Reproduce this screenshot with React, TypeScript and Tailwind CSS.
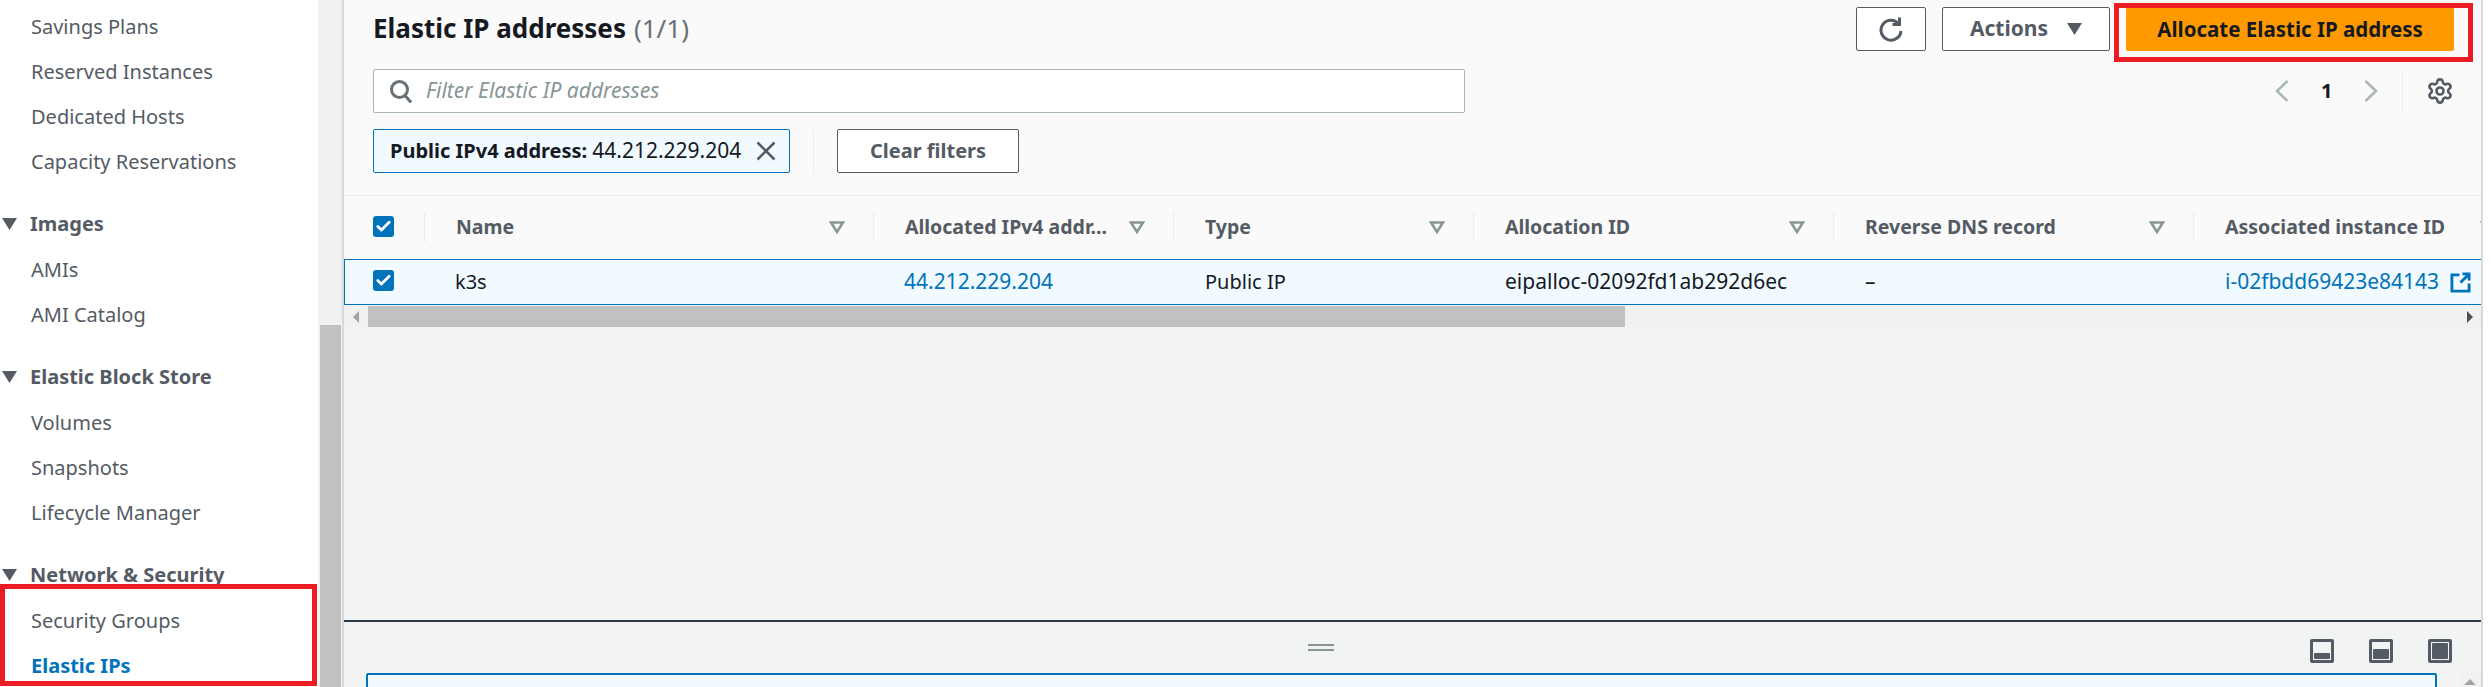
import { Check, Settings } from 'lucide-react';

const font = "font-['Noto_Sans','Open_Sans',sans-serif]";

const groups = [
  { title: '', items: ['Savings Plans', 'Reserved Instances', 'Dedicated Hosts', 'Capacity Reservations'] },
  { title: 'Images', items: ['AMIs', 'AMI Catalog'] },
  { title: 'Elastic Block Store', items: ['Volumes', 'Snapshots', 'Lifecycle Manager'] },
  { title: 'Network & Security', items: ['Security Groups', 'Elastic IPs'] },
];

const columns = [
  { name: 'Name', width: 'w-[449px]' },
  { name: 'Allocated IPv4 addr...', width: 'w-[300px]' },
  { name: 'Type', width: 'w-[300px]' },
  { name: 'Allocation ID', width: 'w-[360px]' },
  { name: 'Reverse DNS record', width: 'w-[360px]' },
  { name: 'Associated instance ID', width: 'w-[331px]' },
];

function Caret() {
  return (
    <svg viewBox="0 0 15 12" className="w-[15px] h-[12px] shrink-0">
      <path d="M0 0h15l-7.500 12z" fill="#545b64" />
    </svg>
  );
}

function FilterIcon() {
  return (
    <svg viewBox="0 0 16 13" className="w-4 h-[13px] shrink-0">
      <path d="M2 1.500h12l-6 9.500z" fill="none" stroke="#879596" strokeWidth="2.500" />
    </svg>
  );
}

function Box() {
  return (
    <div className="w-[21px] h-[21px] rounded-[3px] bg-[#0073bb] flex items-center justify-center">
      <Check className="w-[17px] h-[17px] text-white" strokeWidth={4} />
    </div>
  );
}

function Chevron({ d }: { d: string }) {
  return (
    <svg viewBox="0 0 14 22" className="w-[14px] h-[22px] shrink-0" fill="none" stroke="#aab7b8" strokeWidth="2.500">
      <path d={d} />
    </svg>
  );
}

function PanelIcon({ fill }: { fill: string }) {
  return (
    <div className="w-6 h-6 rounded-[2px] bg-[#545b64] p-[3px]">
      <div className="w-full h-full bg-[#f2f3f3] p-[1px] flex items-end">
        <div className={`w-full bg-[#545b64] rounded-[1px] ${fill}`} />
      </div>
    </div>
  );
}

function Sidebar() {
  return (
    <aside className="w-[318px] shrink-0 bg-white pt-[4px] overflow-hidden">
      {groups.map((group) => (
        <div key={group.title} className="mb-[17px]">
          {group.title && (
            <div className="h-[46px] flex items-center gap-[13px] pl-[2px] text-[20px] font-bold text-[#545b64]">
              <Caret />
              {group.title}
            </div>
          )}
          {group.items.map((item) => (
            <div
              key={item}
              className={`h-[45px] flex items-center pl-[31px] text-[20px] ${
                item === 'Elastic IPs' ? 'font-bold text-[#0073bb]' : 'text-[#545b64]'
              }`}
            >
              {item}
            </div>
          ))}
        </div>
      ))}
    </aside>
  );
}

function Toolbar() {
  return (
    <div className="h-[196px] border-b border-[#eaeded] flex justify-between pl-[29px] pr-[27px] bg-[#fafafa]">
      <div>
        <div className="h-[56px] flex items-center text-[26px] font-bold text-[#16191f]">
          Elastic IP addresses
          <span className="font-normal text-[#687078] ml-[8px]">(1/1)</span>
        </div>
        <div className="mt-[13px] w-[1092px] h-[44px] bg-white border border-[#aab7b8] rounded-[2px] flex items-center pl-[16px] gap-[14px] italic text-[21px] text-[#879596]">
          <svg viewBox="0 0 22 23" className="w-[22px] h-[23px] shrink-0" fill="none" stroke="#687078" strokeWidth="3">
            <circle cx="9.500" cy="9.500" r="8" />
            <path d="M15 15.500l6 7" />
          </svg>
          Filter Elastic IP addresses
        </div>
        <div className="mt-[16px] flex items-center">
          <div className="w-[417px] h-[44px] border border-[#0073bb] rounded-[2px] bg-[#f1faff] flex items-center pl-[16px] text-[21px] text-[#16191f]">
            <span className="font-bold text-[20px] mr-[5px]">Public IPv4 address:</span>
            44.212.229.204
            <svg viewBox="0 0 20 20" className="w-5 h-5 ml-[15px] shrink-0" fill="none" stroke="#545b64" strokeWidth="2.500">
              <path d="M1.500 1.500l17 17M18.500 1.500l-17 17" />
            </svg>
          </div>
          <div className="w-px h-[44px] bg-[#eaeded] ml-[23px] mr-[23px]" />
          <div className="w-[182px] h-[44px] bg-white border border-[#545b64] rounded-[2px] flex items-center justify-center text-[20px] font-bold text-[#545b64]">
            Clear filters
          </div>
        </div>
      </div>
      <div className="flex flex-col items-end">
        <div className="flex pt-[7px] gap-[16px]">
          <div className="w-[70px] h-[44px] bg-white border border-[#545b64] rounded-[2px] flex items-center justify-center">
            <svg viewBox="0 0 26 26" className="w-[26px] h-[26px]" fill="none" stroke="#545b64" strokeWidth="3">
              <path d="M20.500 7.500A10 10 0 1 0 23 15" />
              <path d="M21.500 1.500V8.500H14.500" />
            </svg>
          </div>
          <div className="w-[168px] h-[44px] bg-white border border-[#545b64] rounded-[2px] flex items-center justify-center gap-[19px] text-[21px] font-bold text-[#545b64]">
            Actions
            <Caret />
          </div>
          <div className="w-[328px] h-[44px] bg-[#ff9900] rounded-[2px] flex items-center justify-center text-[20.500px] font-bold text-[#16191f]">
            Allocate Elastic IP address
          </div>
        </div>
        <div className="mt-[18px] flex items-center h-[44px]">
          <Chevron d="M12.500 1L2 11l10.500 10" />
          <span className="w-[11px] mx-[32px] text-[20px] font-bold text-[#16191f] text-center">1</span>
          <Chevron d="M1.500 1L12 11 1.500 21" />
          <div className="w-px h-[44px] bg-[#eaeded] ml-[24px] mr-[23px]" />
          <Settings className="w-[28px] h-[28px] text-[#545b64]" strokeWidth={2.25} />
        </div>
      </div>
    </div>
  );
}

function EipTable() {
  return (
    <div>
      <div className="h-[63px] pb-[1px] flex items-center text-[19.500px] font-bold text-[#545b64] bg-[#fafafa]">
        <div className="w-[81px] shrink-0 pl-[29px] flex items-center justify-between">
          <div className="-mt-[2px]">
            <Box />
          </div>
          <div className="w-px h-[30px] bg-[#eaeded]" />
        </div>
        {columns.map((col) => (
          <div key={col.name} className={`${col.width} shrink-0 flex items-center justify-between pl-[31px]`}>
            <span className="whitespace-nowrap">{col.name}</span>
            <div className="flex items-center gap-[28px]">
              <FilterIcon />
              <div className="w-px h-[30px] bg-[#eaeded]" />
            </div>
          </div>
        ))}
      </div>
      <div className="h-[46px] flex items-center border-y border-[#0073bb] border-l bg-[#f1faff] text-[21px] text-[#16191f] whitespace-nowrap">
        <div className="w-[80px] shrink-0 pl-[28px] -mt-[4px]">
          <Box />
        </div>
        <div className="w-[449px] shrink-0 pl-[30px] text-[20px]">k3s</div>
        <div className="w-[300px] shrink-0 pl-[30px] text-[#0073bb]">44.212.229.204</div>
        <div className="w-[300px] shrink-0 pl-[31px] text-[20px]">Public IP</div>
        <div className="w-[360px] shrink-0 pl-[31px]">eipalloc-02092fd1ab292d6ec</div>
        <div className="w-[360px] shrink-0 pl-[31px]">–</div>
        <div className="shrink-0 pl-[31px] flex items-center gap-[11px] text-[#0073bb]">
          i-02fbdd69423e84143
          <svg viewBox="0 0 22 22" className="w-[21px] h-[21px]" fill="none" stroke="#0073bb" strokeWidth="3">
            <path d="M10 3H2v17h18v-8M13 2h7v7M20 2l-9 9" />
          </svg>
        </div>
      </div>
      <div className="h-[25px] pt-[1px] flex items-start bg-[#f1f1f1]">
        <div className="w-[24px] h-[21px] flex items-center justify-center">
          <div className="border-y-[6px] border-y-transparent border-r-[6px] border-r-[#a3a3a3]" />
        </div>
        <div className="w-[1257px] h-[21px] bg-[#c1c1c1]" />
        <div className="flex-1" />
        <div className="w-[22px] h-[21px] flex items-center justify-center">
          <div className="border-y-[6px] border-y-transparent border-l-[6px] border-l-[#505050]" />
        </div>
      </div>
    </div>
  );
}

export default function App() {
  return (
    <div className={`relative w-[2491px] h-[687px] overflow-hidden flex bg-white ${font}`}>
      <Sidebar />
      {/* page scrollbar */}
      <div className="w-[24px] shrink-0 bg-[#f1f1f1] flex flex-col justify-end pl-[2px] pr-px">
        <div className="h-[362px] bg-[#c1c1c1]" />
      </div>
      <main className="w-[2141px] shrink-0 border-x-2 border-[#d5dbdb] flex flex-col bg-[#f2f3f3]">
        <div className="h-[620px] shrink-0 overflow-hidden">
          <Toolbar />
          <EipTable />
        </div>
        <div className="flex-1 border-t-2 border-[#2a3a4a] bg-[#f2f3f3] pl-[22px] pr-[44px] relative overflow-hidden">
          <div className="absolute left-[964px] top-[22px] w-[26px] h-[7px] border-y-2 border-[#879596]" />
          <div className="flex justify-end gap-[35px] pt-[17px] -mr-[15px]">
            <PanelIcon fill="h-[6px]" />
            <PanelIcon fill="h-[10px]" />
            <PanelIcon fill="h-[16px]" />
          </div>
          <div className="mt-[10px] h-[40px] border-2 border-[#0073bb] rounded-[2px] bg-[#f1faff]" />
          <div className="absolute right-0 top-[51px] w-[22px] h-[20px] bg-[#f1f1f1] flex justify-center pt-[6px]">
            <div className="w-0 h-0 border-x-[6px] border-x-transparent border-b-[6px] border-b-[#a3a3a3]" />
          </div>
        </div>
      </main>
      {/* annotation boxes */}
      <div className="absolute left-0 top-[584px] w-[317px] h-[102px] border-[5px] border-[#ed1c24]" />
      <div className="absolute left-[2114px] top-[3px] w-[359px] h-[59px] border-[5px] border-[#ed1c24]" />
    </div>
  );
}
